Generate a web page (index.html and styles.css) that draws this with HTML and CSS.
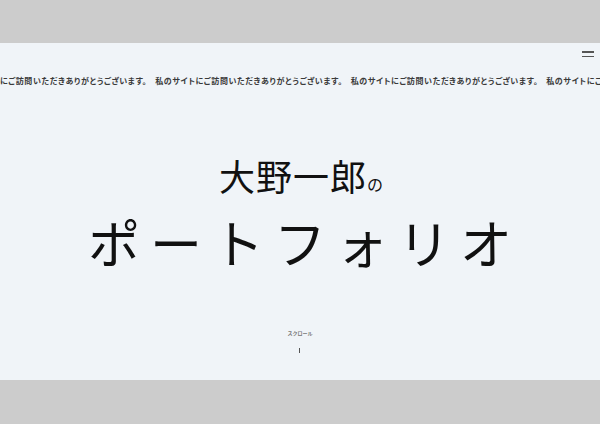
FILE: index.html
```html
<!DOCTYPE html>
<html lang="ja">
<head>
<meta charset="utf-8">
<title>大野一郎のポートフォリオ</title>
<link rel="stylesheet" href="styles.css">
</head>
<body>
<div class="top-band"></div>
<main class="panel">
  <header class="header">
    <button class="menu" aria-label="メニュー"><span></span><span></span></button>
  </header>
  <div class="marquee">
    <span class="msg first">にご訪問いただきありがとうございます。</span><span class="msg">私のサイトにご訪問いただきありがとうございます。</span><span class="msg">私のサイトにご訪問いただきありがとうございます。</span><span class="msg">私のサイトにご</span>
  </div>
  <section class="hero">
    <h1 class="title">
      <span class="name">大野一郎<small>の</small></span>
      <span class="sub">ポートフォリオ</span>
    </h1>
    <div class="scroll">
      <span class="scroll-label">スクロール</span>
      <span class="scroll-line"></span>
    </div>
  </section>
</main>
</body>
</html>
```
FILE: styles.css
```css
html, body {
  margin: 0;
  padding: 0;
}
body {
  background: #cccccc;
  font-family: "Noto Sans CJK JP", "Noto Sans", sans-serif;
  color: #111;
  height: 424px;
  overflow: hidden;
}
.top-band {
  height: 43px;
}
.panel {
  height: 337px;
  background: #f0f4f8;
  display: flex;
  flex-direction: column;
  overflow: hidden;
}
.header {
  display: flex;
  justify-content: flex-end;
  padding: 8px 6px 0 0;
  height: 14px;
}
.menu {
  border: 0;
  background: none;
  padding: 0;
  width: 12px;
  height: 8px;
  display: flex;
  flex-direction: column;
  gap: 3px;
}
.menu span {
  display: block;
  height: 1.5px;
  background: #555;
  width: 12px;
}
.marquee {
  margin-top: 10px;
  white-space: nowrap;
  font-size: 8px;
  line-height: 12px;
  font-weight: 700;
  color: #3a3a3a;
  letter-spacing: 0.6px;
  padding-left: 0;
  font-feature-settings: "palt";
}
.msg {
  margin-right: 8px;
}
.hero {
  flex: 1;
  display: flex;
  flex-direction: column;
  align-items: center;
}
.title {
  margin: 68px 0 0;
  font-weight: 400;
  display: flex;
  flex-direction: column;
  align-items: center;
}
.name {
  font-size: 36px;
  line-height: 40px;
  letter-spacing: 1px;
  padding-left: 2px;
}
.name small {
  font-size: 16px;
  letter-spacing: 0;
}
.sub {
  font-size: 52px;
  line-height: 64px;
  letter-spacing: 10px;
  margin-top: 6px;
  padding-left: 10px;
}
.scroll {
  margin-top: 55px;
  display: flex;
  flex-direction: column;
  align-items: center;
}
.scroll-label {
  font-size: 5px;
  line-height: 8px;
  color: #777;
  font-weight: 700;
}
.scroll-line {
  display: block;
  width: 1px;
  height: 5px;
  background: #555;
  margin-top: 11px;
}
```
